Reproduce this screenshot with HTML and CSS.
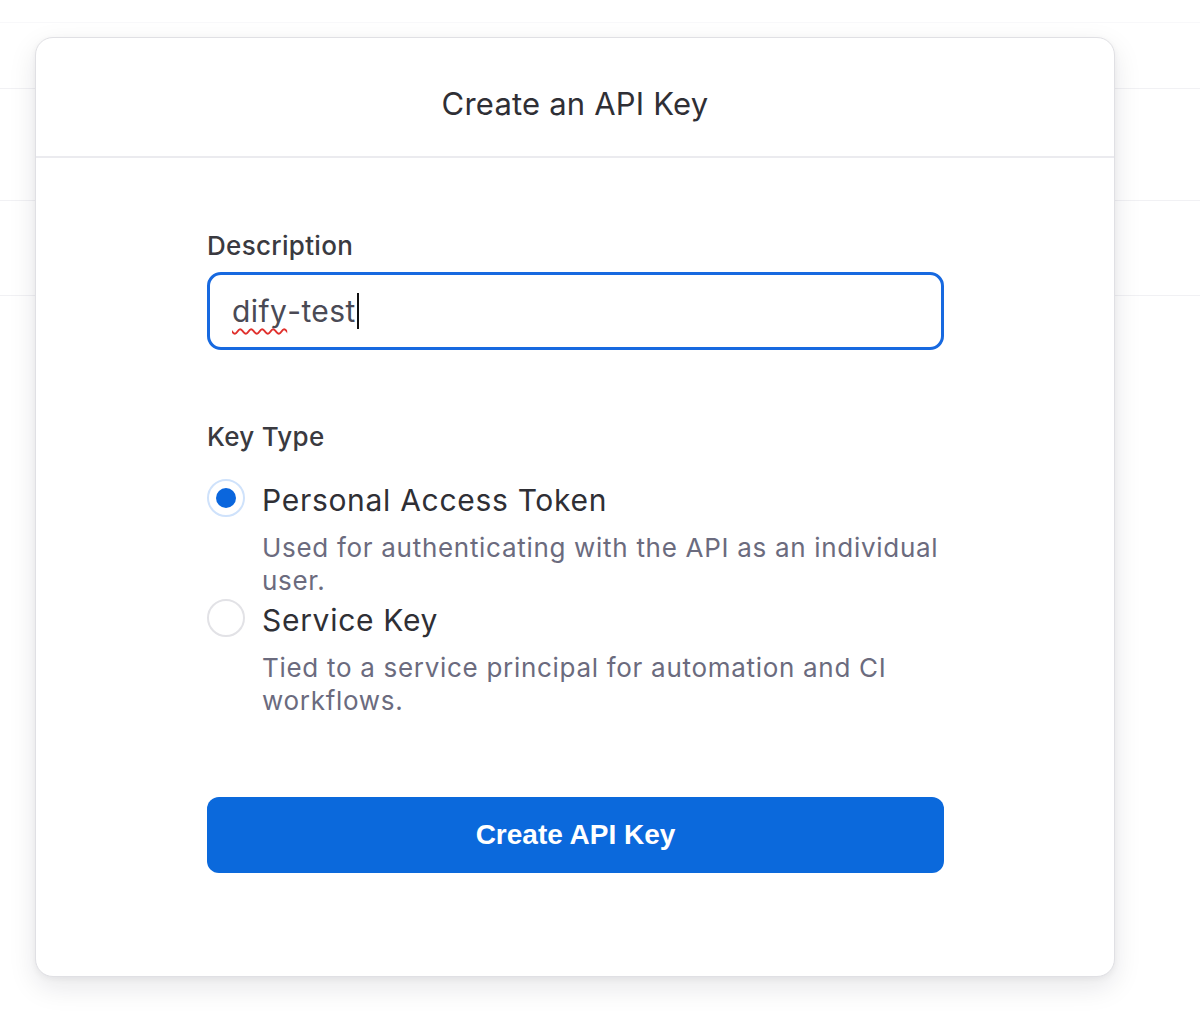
FILE: index.html
```html
<!DOCTYPE html>
<html>
<head>
<meta charset="utf-8">
<link rel="stylesheet" href="styles.css">
</head>
<body>
<div class="backdrop">
  <div class="bg-row r1"></div>
  <div class="bg-row r2"></div>
  <div class="bg-row r3"></div>
  <div class="bg-row r4"></div>
</div>
<div class="modal">
  <div class="modal-header">
    <h2 class="modal-title">Create an API Key</h2>
  </div>
  <div class="modal-body">
    <div class="field">
      <div class="field-label">Description</div>
      <div class="input"><span class="misspelled">dify</span>-test<span class="caret"></span></div>
    </div>
    <div class="field keytype">
      <div class="field-label">Key Type</div>
      <div class="option">
        <div class="radio checked"><span class="dot"></span></div>
        <div class="option-text">
          <div class="option-title">Personal Access Token</div>
          <div class="option-desc">Used for authenticating with the API as an individual user.</div>
        </div>
      </div>
      <div class="option">
        <div class="radio"></div>
        <div class="option-text">
          <div class="option-title">Service Key</div>
          <div class="option-desc">Tied to a service principal for automation and CI workflows.</div>
        </div>
      </div>
    </div>
    <button class="primary">Create API Key</button>
  </div>
</div>
</body>
</html>
```
FILE: styles.css
```css
html, body {
  margin: 0;
  padding: 0;
  background: #ffffff;
  font-family: Inter, "Noto Sans", sans-serif;
}
body {
  width: 1200px;
  height: 1021px;
  overflow: hidden;
  position: relative;
}
.backdrop {
  display: flex;
  flex-direction: column;
}
.bg-row {
  border-bottom: 1px solid #f1f1f4;
}
.r1 { height: 22px; border-bottom-color: #f8f8fa; }
.r2 { height: 65px; }
.r3 { height: 111px; }
.r4 { height: 94px; }

.modal {
  position: absolute;
  left: 35px;
  top: 37px;
  width: 1080px;
  height: 940px;
  box-sizing: border-box;
  background: #fff;
  border: 1.5px solid #e0e0e4;
  border-radius: 18px;
  box-shadow: 0 10px 28px rgba(20, 20, 40, 0.10), 0 2px 6px rgba(20, 20, 40, 0.05);
  overflow: hidden;
}
.modal-header {
  height: 120px;
  border-bottom: 2.5px solid #ebebef;
  display: flex;
  align-items: center;
  justify-content: center;
  padding-top: 12px;
  box-sizing: border-box;
}
.modal-title {
  margin: 0;
  font-size: 31px;
  font-weight: 400;
  color: #2f2f35;
  letter-spacing: 0.2px;
}
.modal-body {
  padding: 0 0 0 171px;
  width: 737px;
  display: flex;
  flex-direction: column;
}
.field-label {
  font-size: 26px;
  font-weight: 500;
  line-height: 32px;
  color: #3a3a40;
  letter-spacing: 0.3px;
  margin-top: 72px;
  margin-bottom: 10px;
}
.input {
  height: 78px;
  box-sizing: border-box;
  border: 3px solid #1769e0;
  border-radius: 14px;
  padding: 0 0 0 22px;
  display: flex;
  align-items: center;
  font-size: 30px;
  letter-spacing: 0.4px;
  color: #4a4a55;
}
.misspelled {
  text-decoration: underline wavy #e0302c;
  text-decoration-thickness: 1.5px;
  text-underline-offset: 6px;
}
.caret {
  display: inline-block;
  width: 2px;
  height: 36px;
  background: #111;
  margin-left: 1px;
}
.keytype .field-label {
  margin-top: 71px;
  margin-bottom: 26px;
}
.option {
  display: flex;
  gap: 17px;
  align-items: flex-start;
}
.option + .option {
  margin-top: 2px;
}
.radio {
  width: 38px;
  height: 38px;
  box-sizing: border-box;
  border-radius: 50%;
  border: 2px solid #e2e2e6;
  flex: none;
  display: flex;
  align-items: center;
  justify-content: center;
}
.radio.checked {
  border: 2px solid #cfe2fb;
}
.dot {
  width: 20px;
  height: 20px;
  border-radius: 50%;
  background: #0a66dd;
}
.option-text {
  display: flex;
  flex-direction: column;
}
.option-title {
  font-size: 30px;
  line-height: 38px;
  color: #2f2f35;
  letter-spacing: 0.7px;
  margin-top: 2px;
}
.option-desc {
  font-size: 26px;
  line-height: 33px;
  color: #6b6b7e;
  margin-top: 12px;
  letter-spacing: 0.7px;
}
.primary {
  margin-top: 80px;
  height: 76px;
  border: none;
  border-radius: 12px;
  background: #0b69dc;
  color: #fff;
  font-family: "Liberation Sans", Arial, sans-serif;
  font-weight: 700;
  font-size: 28px;
  letter-spacing: 0;
  padding: 0;
}
```
